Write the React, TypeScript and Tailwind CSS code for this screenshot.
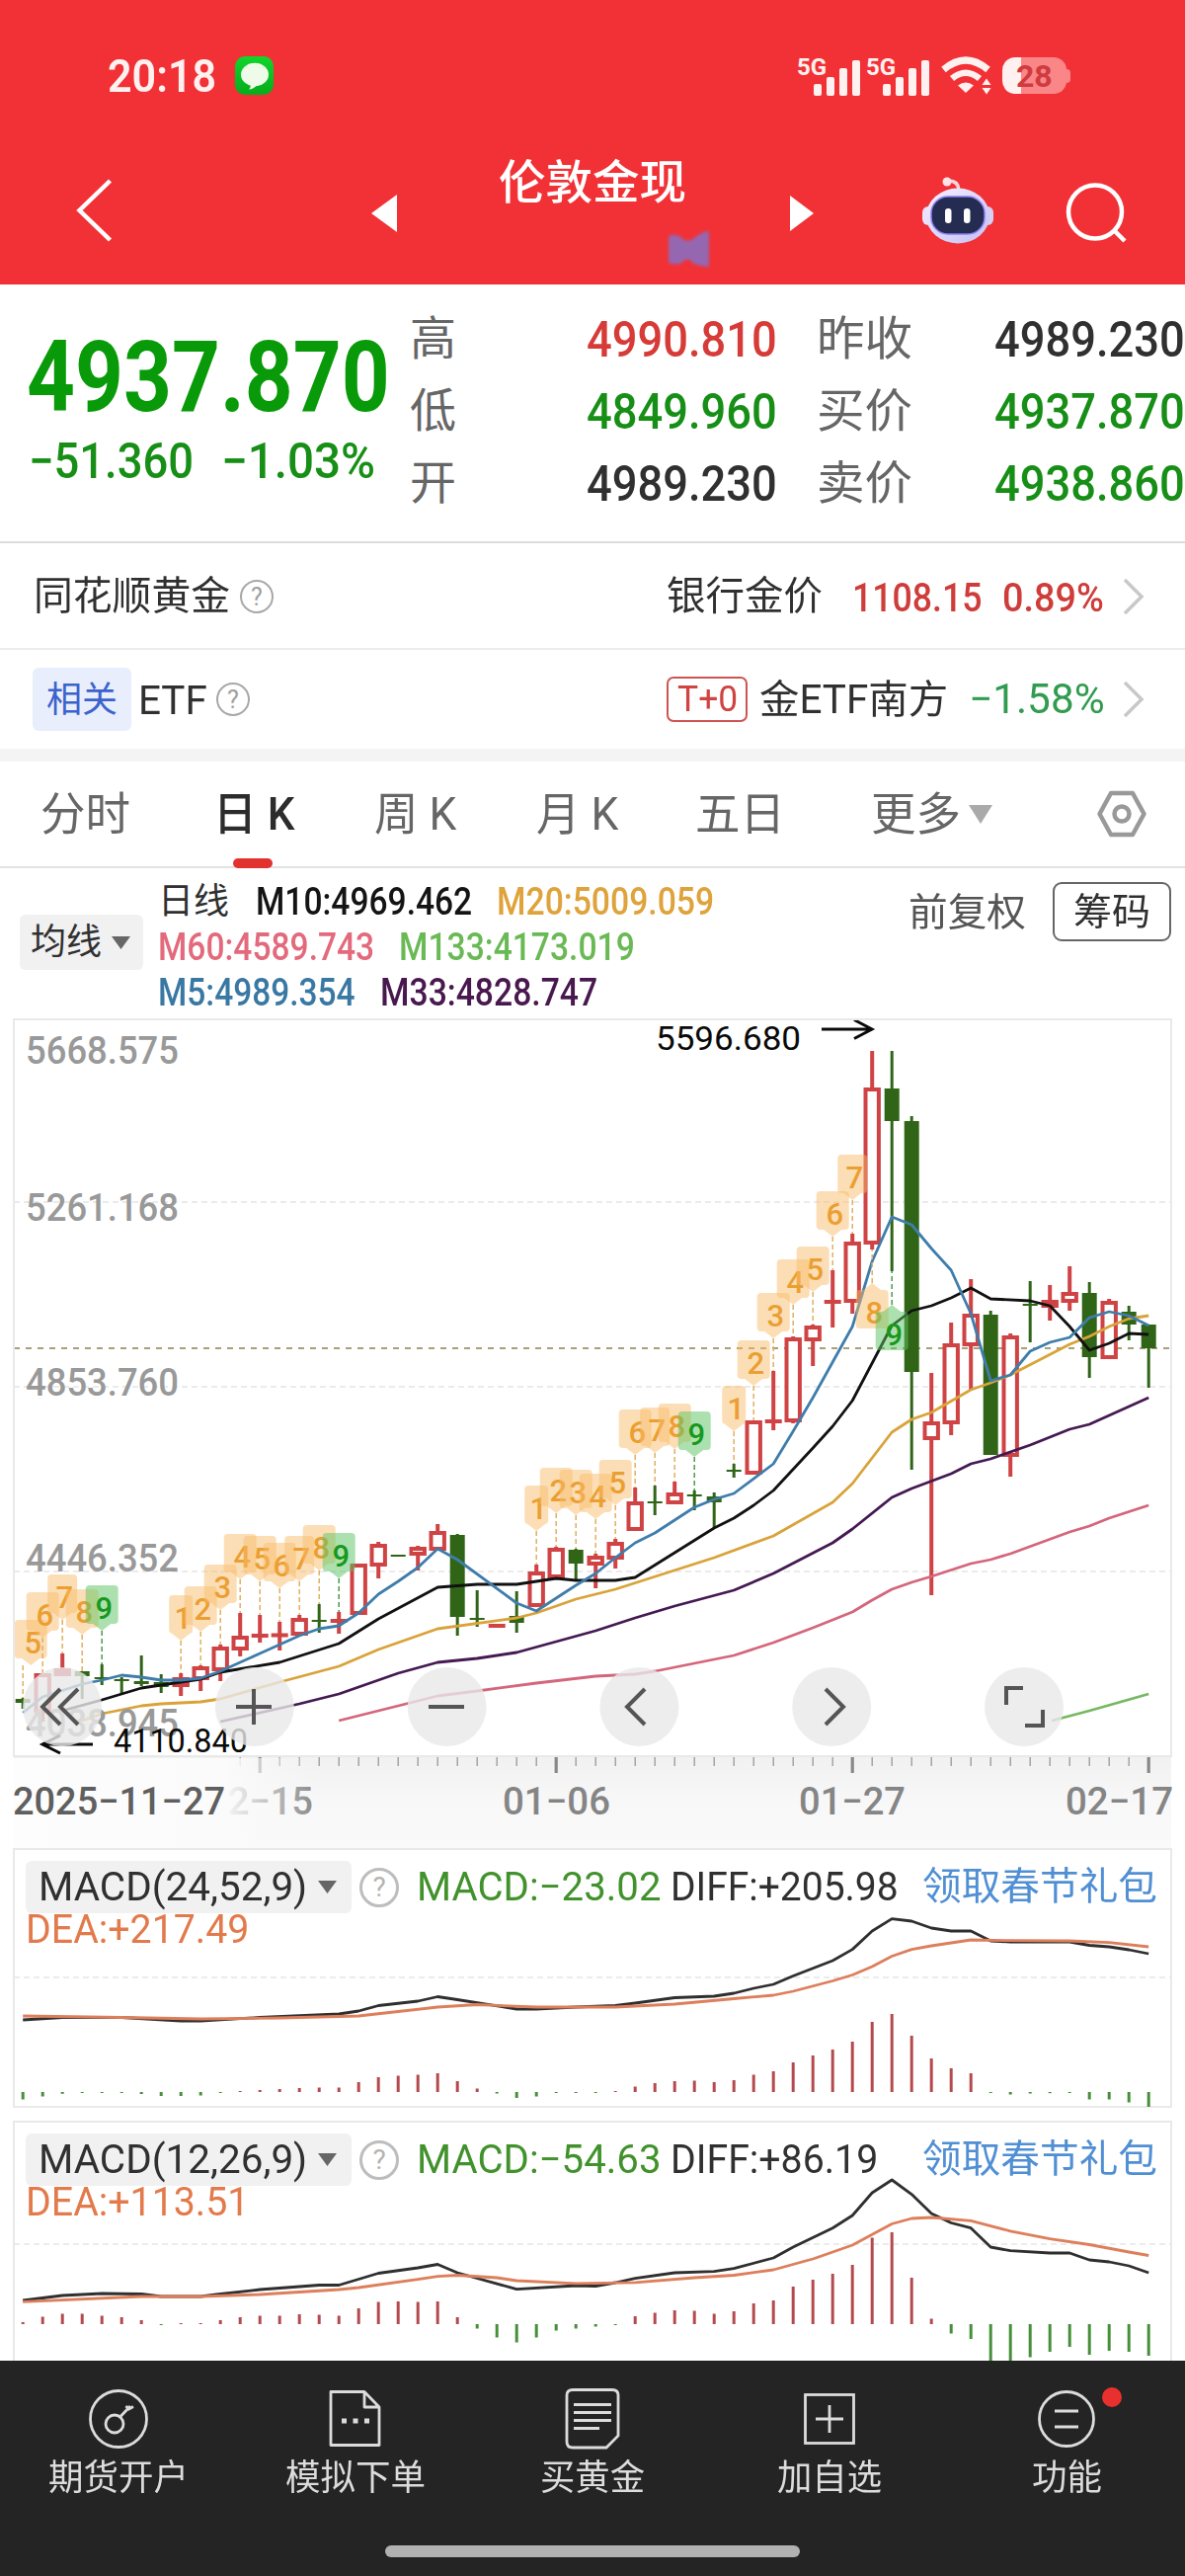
import React, { useLayoutEffect, useRef, useState } from 'react';

interface FitProps {
  className?: string;
  children: React.ReactNode;
}

// Stretches or squeezes a line of text so it fills the width of its box
const Fit: React.FC<FitProps> = ({ className = '', children }) => {
  const box = useRef<HTMLSpanElement>(null);
  const inner = useRef<HTMLSpanElement>(null);
  const [ratio, setRatio] = useState(1);

  useLayoutEffect(() => {
    if (box.current && inner.current) {
      setRatio(box.current.clientWidth / inner.current.offsetWidth);
    }
  }, []);

  return (
    <span ref={box} className={`block shrink-0 whitespace-nowrap leading-none ${className}`}>
      <span ref={inner} className="inline-block origin-left" style={{ transform: `scaleX(${ratio})` }}>
        {children}
      </span>
    </span>
  );
};

const Help: React.FC<{ className?: string }> = ({ className = '' }) => (
  <span className={`flex shrink-0 items-center justify-center rounded-full leading-none ${className}`}>?</span>
);

const Chevron = () => (
  <svg width="24" height="40" viewBox="0 0 24 40" fill="none" stroke="#c8c8c8" strokeWidth="3.5">
    <path d="M3 3 L20 20 L3 37" />
  </svg>
);

/* ---------- chart data: pixel rows of the chart canvas ---------- */

const px = (i: number) => 23.2 + 20 * i;

// [high, bodyTop, bodyBottom, low, up]
type Candle = [number, number, number, number, 0 | 1];

const candles: Candle[] = [
  [1719, 1720, 1724, 1730, 0], [1694, 1695, 1732, 1743, 1], [1674, 1690, 1695, 1697, 1], [1692, 1692, 1697, 1720, 0],
  [1685, 1698, 1700, 1706, 0], [1698, 1700, 1702, 1715, 0], [1676, 1702, 1705, 1707, 0], [1695, 1703, 1708, 1714, 0],
  [1694, 1699, 1706, 1717, 1], [1686, 1688, 1699, 1712, 1], [1665, 1668, 1690, 1702, 1], [1633, 1657, 1669, 1677, 1],
  [1635, 1655, 1657, 1663, 1], [1642, 1654, 1657, 1671, 1], [1635, 1639, 1654, 1654, 1], [1624, 1640, 1642, 1653, 0],
  [1632, 1639, 1643, 1654, 1], [1583, 1584, 1633, 1633, 1], [1561, 1564, 1584, 1598, 1], [1574, 1574, 1576, 1576, 0],
  [1565, 1567, 1573, 1590, 1], [1543, 1551, 1568, 1569, 1], [1553, 1554, 1637, 1656, 0], [1610, 1638, 1640, 1647, 0],
  [1644, 1644, 1648, 1648, 1], [1611, 1636, 1643, 1653, 0], [1584, 1592, 1625, 1627, 1], [1566, 1568, 1596, 1597, 1],
  [1568, 1569, 1583, 1600, 0], [1573, 1576, 1583, 1608, 1], [1558, 1562, 1577, 1588, 1], [1506, 1521, 1548, 1548, 1],
  [1504, 1520, 1522, 1534, 0], [1500, 1512, 1521, 1522, 1], [1509, 1513, 1515, 1529, 0], [1511, 1515, 1521, 1547, 0],
  [1482, 1488, 1490, 1496, 0], [1438, 1439, 1491, 1493, 1], [1388, 1438, 1440, 1448, 1], [1353, 1355, 1438, 1441, 1],
  [1341, 1343, 1356, 1383, 1], [1286, 1317, 1319, 1344, 1], [1249, 1258, 1317, 1330, 1], [1064, 1102, 1258, 1265, 1],
  [1064, 1102, 1135, 1287, 0], [1130, 1135, 1389, 1488, 0], [1390, 1440, 1456, 1615, 1], [1339, 1361, 1440, 1453, 1],
  [1295, 1331, 1361, 1407, 1], [1327, 1331, 1473, 1473, 0], [1350, 1353, 1473, 1495, 1], [1297, 1320, 1322, 1359, 0],
  [1301, 1317, 1322, 1337, 1], [1282, 1309, 1317, 1327, 1], [1298, 1309, 1374, 1395, 0], [1315, 1318, 1374, 1376, 1],
  [1322, 1328, 1341, 1357, 0], [1341, 1341, 1365, 1405, 0],
];

type Pt = [number, number];

const averages: { color: string; pts: Pt[] }[] = [
  { color: '#76b862', pts: [[52.1, 1742], [54, 1732], [57, 1715]] },
  {
    color: '#d4667c',
    pts: [[16, 1742], [21, 1717], [23, 1712], [26, 1704], [29, 1697], [31, 1695], [32, 1692], [36, 1676], [38, 1663], [40, 1648], [42, 1632], [43, 1620], [44, 1609], [45, 1602], [46, 1596], [48, 1583], [49, 1579], [50, 1573], [53, 1551], [54, 1545], [55, 1537], [57, 1524]],
  },
  {
    color: '#451a52',
    pts: [[10, 1743], [14, 1725], [16, 1715], [19, 1694], [21, 1683], [23, 1679], [25, 1673], [27, 1662], [29, 1651], [31, 1638], [33, 1626], [36, 1610], [38, 1593], [41, 1562], [42, 1548], [44, 1516], [45, 1507], [47, 1492], [48, 1482], [49, 1477], [51, 1463], [53, 1447], [54, 1442], [56, 1424], [57, 1415]],
  },
  {
    color: '#d9a33a',
    pts: [[3, 1742], [4, 1735], [6, 1727], [7, 1725], [9, 1723], [10, 1720], [13, 1703], [16, 1687], [18, 1670], [21, 1649], [25, 1638], [26, 1633], [28, 1619], [29, 1614], [30, 1609], [35, 1577], [38, 1555], [41, 1521], [42, 1502], [43, 1476], [44, 1450], [45, 1437], [46, 1430], [48, 1407], [49, 1400], [50, 1392], [53, 1361], [54, 1353], [55, 1343], [56, 1335], [57, 1332]],
  },
  {
    color: '#111111',
    pts: [[2, 1732], [4, 1721], [6, 1709], [8, 1703], [9, 1700], [10, 1693], [13, 1683], [16, 1664], [18, 1639], [21, 1607], [23, 1604], [25, 1604], [26, 1601], [27, 1598], [28, 1600], [30, 1600], [31, 1597], [35, 1547], [36, 1537], [37, 1524], [38, 1509], [40, 1466], [41, 1444], [42, 1418], [43, 1380], [44, 1342], [45, 1327], [46, 1322], [47, 1314], [48, 1304], [49, 1315], [51, 1317], [52, 1322], [53, 1343], [54, 1367], [55, 1360], [56, 1350], [57, 1351]],
  },
  {
    color: '#3f7dab',
    pts: [[0, 1734], [1, 1718], [3, 1705], [4, 1701], [5, 1696], [6, 1698], [7, 1701], [8, 1701], [9, 1699], [10, 1692], [11, 1683], [12, 1674], [13, 1665], [14, 1656], [15, 1649], [16, 1646], [17, 1633], [18, 1614], [19, 1601], [20, 1587], [21, 1568], [22, 1579], [25, 1623], [26, 1631], [27, 1618], [28, 1605], [29, 1593], [30, 1577], [31, 1562], [32, 1552], [33, 1539], [34, 1526], [35, 1518], [36, 1512], [38, 1482], [39, 1449], [40, 1415], [42, 1343], [43, 1277], [44, 1232], [45, 1240], [46, 1264], [47, 1286], [48, 1330], [49, 1398], [50, 1392], [51, 1368], [52, 1359], [53, 1354], [54, 1334], [55, 1328], [56, 1332], [57, 1342]],
  },
];

// [candle, top of the tag, count, x shift]
const tags: [number, number, number, number?][] = [
  [0, 1640, 5, 8], [1, 1612, 6], [2, 1594, 7], [3, 1609, 8], [4, 1605, 9],
  [8, 1615, 1], [9, 1606, 2], [10, 1584, 3], [11, 1553, 4], [12, 1555, 5], [13, 1562, 6], [14, 1555, 7], [15, 1544, 8], [16, 1552, 9],
  [26, 1504, 1], [27, 1486, 2], [28, 1488, 3], [29, 1492, 4], [30, 1478, 5], [31, 1427, 6], [32, 1425, 7], [33, 1421, 8], [34, 1429, 9],
  [36, 1403, 1], [37, 1357, 2], [38, 1309, 3], [39, 1275, 4], [40, 1262, 5], [41, 1206, 6], [42, 1169, 7],
];

const macdSlow = {
  zero: 2118,
  mid: 2002,
  bars: [-7.5, -4.5, -1.8, -1, -1, -1, -2, -4, -4, -3.5, -1, 1, 2, 3, 4, 4.5, 4.5, 10, 15, 16.5, 17.5, 19, 11, 3.5, -1.5, -6, -4.5, -1, -1, -1, 1, 5.5, 9, 11, 11.5, 10, 12, 17.5, 21, 30, 37, 43, 51, 71, 79, 57, 34, 24, 19, -1, -2.5, -1.5, -1.2, -1, -7.5, -7.5, -10.5, -15],
  diff: [[0, 2045], [2, 2042.5], [5, 2042.5], [8, 2046], [9, 2046], [12, 2042.5], [16, 2039], [17, 2036], [18, 2030.5], [20, 2026], [21, 2021.5], [22, 2024.5], [25, 2034], [26, 2034], [28, 2032], [30, 2030.5], [31, 2028], [33, 2022.5], [35, 2021], [36, 2018], [37, 2013], [38, 2009], [39, 2000.5], [41, 1985], [42, 1973.6], [43, 1955], [44, 1942.6], [45, 1945], [46, 1952], [47, 1955], [48, 1955], [49, 1965], [50, 1966], [53, 1966], [54, 1969.5], [55, 1971], [56, 1974], [57, 1978]] as Pt[],
  dea: [[0, 2041], [5, 2042.5], [9, 2044], [13, 2043], [17, 2041], [19, 2036.5], [21, 2032], [23, 2029.5], [26, 2032], [30, 2032], [33, 2029], [36, 2023.5], [38, 2020], [39, 2016], [41, 2005.5], [42, 1999.5], [43, 1991], [44, 1980.5], [45, 1973.6], [46, 1970], [48, 1964], [50, 1964.7], [53, 1965], [55, 1966.7], [57, 1971]] as Pt[],
};

const macdFast = {
  zero: 2353,
  mid: 2272,
  bars: [2, 7.5, 10.5, 10.5, 8.5, 7, 4, -1, 1, 1, 4, 7, 8.5, 8.5, 10, 9.5, 8.5, 16, 22.5, 23, 22.5, 23, 7, -4.5, -13.5, -18.5, -13.5, -6.5, -4.5, -2.5, -1, 8, 11.5, 14, 13.5, 10.5, 13, 21, 24, 38, 45, 51, 60, 87.5, 93, 47, 5.5, -9.5, -15, -45, -45, -33.5, -28, -23, -31, -27, -28, -32],
  diff: [[0, 2329], [2, 2324], [4, 2322], [6, 2322.5], [7, 2325], [9, 2325], [10, 2322.5], [12, 2318], [15, 2313.5], [16, 2313.5], [18, 2301.5], [20, 2296], [21, 2292.5], [22, 2301], [25, 2317.6], [28, 2314], [29, 2314.5], [30, 2311], [31, 2306.6], [33, 2301], [35, 2299.7], [36, 2296.6], [38, 2286], [39, 2275], [41, 2255.7], [42, 2243], [43, 2220], [44, 2207], [45, 2221.6], [46, 2241], [47, 2250.5], [48, 2255.7], [49, 2275], [50, 2278.7], [52, 2281], [53, 2281], [54, 2288], [55, 2290], [56, 2294], [57, 2301]] as Pt[],
  dea: [[0, 2330.4], [6, 2325], [9, 2325], [12, 2323], [16, 2318], [17, 2316], [20, 2307.7], [21, 2304.6], [22, 2303.5], [24, 2306], [25, 2309], [28, 2311.8], [31, 2310.8], [34, 2306], [36, 2303.5], [38, 2298], [40, 2287], [42, 2273], [44, 2251.5], [45, 2246], [46, 2245], [48, 2248.4], [50, 2258.8], [52, 2266.7], [54, 2272.5], [56, 2280], [57, 2283.5]] as Pt[],
};

const line = (pts: Pt[]) => pts.map(([i, y]) => `${px(i)},${y}`).join(' ');

/* ---------- header ---------- */

const Signal = () => (
  <div className="relative h-[42px] w-[70px]">
    <Fit className="absolute left-0 top-0 w-[30px] text-[24px] font-bold">5G</Fit>
    <svg className="absolute left-0 top-0" width="70" height="42" fill="#fff1f0">
      <rect x="17" y="29" width="8" height="12" rx="2" />
      <rect x="30" y="22" width="8" height="19" rx="2" />
      <rect x="43" y="13" width="8" height="28" rx="2" />
      <rect x="56" y="5" width="8" height="36" rx="2" />
    </svg>
  </div>
);

const StatusBar = () => (
  <div className="flex h-[156px] items-center pb-[3px] pl-[109px] text-[#fff1f0]">
    <Fit className="w-[110px] text-[47px] font-semibold">20:18</Fit>
    <div className="ml-[19px] flex h-[39px] w-[39px] items-center justify-center rounded-[10px] bg-gradient-to-b from-[#12d52c] to-[#06ab1b]">
      <svg width="30" height="28" viewBox="0 0 30 28" fill="#eefbe9">
        <ellipse cx="15" cy="12.5" rx="14" ry="11.8" />
        <path d="M10 20 Q12 25 9 27.5 Q15 27 18 22 Z" />
      </svg>
    </div>
    <div className="ml-[530px] flex items-center">
      <Signal />
      <Signal />
      <svg className="ml-[6px]" width="52" height="40" viewBox="0 0 52 40" fill="none" stroke="#fff1f0">
        <path d="M2.5 13.5 Q25 -5.500 47.500 13.500" strokeWidth="7" />
        <path d="M11 22.500 Q25 11 39 22.500" strokeWidth="6.500" />
        <path d="M17 29.500 Q25 23.500 33 29.500 L25 37 Z" fill="#fff1f0" stroke="none" />
        <path d="M41.500 29 L46 22.500 L50.500 29 Z M41.500 32 L46 38.500 L50.500 32 Z" fill="#fff1f0" stroke="none" />
      </svg>
      <div className="ml-[10px] flex h-[37px] w-[65px] items-center overflow-hidden rounded-[13px] bg-gradient-to-r from-[#fff1f0] from-[30%] to-[#fb8688] to-[30%] pl-[14px] text-[#cf3b3e]">
        <Fit className="w-[37px] text-[32px] font-bold">28</Fit>
      </div>
      <div className="h-[14px] w-[4px] rounded-r-full bg-[#fb8688]" />
    </div>
  </div>
);

const Robot = () => (
  <svg width="74" height="68" viewBox="0 0 74 68">
    <defs>
      <linearGradient id="shell" x1="0" y1="0" x2="1" y2="1">
        <stop offset="0" stopColor="#f6efff" />
        <stop offset="1" stopColor="#c3c0f5" />
      </linearGradient>
    </defs>
    <path d="M26 4 Q37 3 38 13" fill="none" stroke="#fbd3dc" strokeWidth="3.5" />
    <circle cx="26" cy="5" r="4.500" fill="#ffe3e8" />
    <rect x="1" y="30" width="12" height="19" rx="6" fill="#e9e4fb" />
    <rect x="61" y="30" width="12" height="19" rx="6" fill="#d5cff6" />
    <ellipse cx="37" cy="39.500" rx="32" ry="28" fill="url(#shell)" />
    <rect x="10" y="20" width="54" height="38" rx="17" fill="#252c52" stroke="#8c7cf0" strokeWidth="1.500" />
    <rect x="24" y="32" width="6.500" height="15" rx="3.200" fill="#fff" />
    <rect x="43" y="32" width="6.500" height="15" rx="3.200" fill="#fff" />
  </svg>
);

const Header = () => (
  <header className="h-[288px] bg-[#f23136]">
    <StatusBar />
    <div className="flex h-[132px] items-start text-white">
      <svg className="ml-[74px] mt-[23px]" width="42" height="68" viewBox="0 0 42 68" fill="none" stroke="#fff" strokeWidth="4.500">
        <path d="M37.500 4 L6.500 34 L37.500 64" />
      </svg>
      <svg className="ml-[260px] mt-[41px]" width="26" height="38" fill="#fff">
        <path d="M26 0 V38 L0 19 Z" />
      </svg>
      <div className="ml-[103px] w-[191px]">
        <Fit className="mt-[5px] w-[190px] text-[47px] font-medium">伦敦金现</Fit>
        <svg className="ml-[169px] mt-[24px] blur-[1.500px]" width="46" height="40" fill="#9567b0">
          <path d="M3 8 Q5 4 14 7 Q22 16 30 8 Q38 2 44 2 V38 Q34 38 27 34 A5.500 5.500 0 0 0 17 34 Q10 37 3 34 Z" />
        </svg>
      </div>
      <svg className="ml-[104px] mt-[42px]" width="24" height="36" fill="#fff">
        <path d="M0 0 V36 L24 18 Z" />
      </svg>
      <div className="ml-[109px] mt-[23px]">
        <Robot />
      </div>
      <svg className="ml-[72px] mt-[29px]" width="64" height="64" viewBox="0 0 64 64" fill="none" stroke="#fff" strokeWidth="4.500">
        <circle cx="30" cy="29.500" r="27" />
        <path d="M49 48 L60 59" />
      </svg>
    </div>
  </header>
);

/* ---------- quote ---------- */

const quoteRows = [
  ['高', '4990.810', 'text-[#d63b38]', '昨收', '4989.230', 'text-[#303030]'],
  ['低', '4849.960', 'text-[#178f17]', '买价', '4937.870', 'text-[#178f17]'],
  ['开', '4989.230', 'text-[#303030]', '卖价', '4938.860', 'text-[#178f17]'],
];

const Quote = () => (
  <section className="flex h-[262px] border-b-2 border-[#dcdcdc]">
    <div className="ml-[27px] w-[388px]">
      <Fit className="mt-[44px] w-[368px] text-[100px] font-bold text-[#089a08]">4937.870</Fit>
      <div className="mt-[10px] flex pl-[2px] text-[50px] text-[#178f17]">
        <Fit className="w-[167px] font-medium">−51.360</Fit>
        <Fit className="ml-[28px] w-[156px] font-medium">−1.03%</Fit>
      </div>
    </div>
    <div className="mt-[18px] flex flex-col">
      {quoteRows.map(([a, av, ac, b, bv, bc]) => (
        <div key={a} className="flex h-[73px] items-center">
          <Fit className="w-[47px] text-[47px] text-[#666]">{a}</Fit>
          <Fit className={`ml-[132px] mt-[3px] w-[193px] text-[50px] font-medium ${ac}`}>{av}</Fit>
          <Fit className="ml-[40px] w-[97px] text-[47px] text-[#666]">{b}</Fit>
          <Fit className={`ml-[83px] mt-[3px] w-[193px] text-[50px] font-medium ${bc}`}>{bv}</Fit>
        </div>
      ))}
    </div>
  </section>
);

const Related = () => (
  <section className="text-[#303030]">
    <div className="flex h-[108px] items-center border-b-2 border-[#ececec] pl-[34px] pr-[40px] pt-[2px]">
      <Fit className="w-[199px] text-[40px]">同花顺黄金</Fit>
      <Help className="ml-[10px] h-[34px] w-[34px] border-2 border-[#a8a8a8] text-[25px] text-[#a0a0a0]" />
      <Fit className="ml-auto w-[158px] text-[40px]">银行金价</Fit>
      <Fit className="ml-[30px] mt-[3px] w-[132px] text-[40px] font-medium text-[#cf3d3a]">1108.15</Fit>
      <Fit className="ml-[20px] mt-[3px] w-[103px] text-[40px] font-medium text-[#cf3d3a]">0.89%</Fit>
      <span className="ml-[18px]"><Chevron /></span>
    </div>
    <div className="flex h-[100px] items-center pl-[33px] pr-[40px]">
      <div className="flex h-[64px] w-[100px] items-center justify-center rounded-[6px] bg-[#e9eefd] text-[#3c62cc]">
        <Fit className="w-[72px] pt-[2px] text-[36px]">相关</Fit>
      </div>
      <Fit className="ml-[7px] mt-[2px] w-[70px] text-[41px]">ETF</Fit>
      <Help className="ml-[9px] h-[34px] w-[34px] border-2 border-[#a8a8a8] text-[25px] text-[#a0a0a0]" />
      <div className="ml-auto flex h-[46px] w-[82px] items-center justify-center rounded-[7px] border-2 border-[#cc5553] text-[#cf4442]">
        <Fit className="w-[61px] text-[36px]">T+0</Fit>
      </div>
      <Fit className="ml-[12px] mt-[2px] w-[191px] text-[40px]">金ETF南方</Fit>
      <Fit className="ml-[21px] w-[138px] text-[42px] text-[#319c50]">−1.58%</Fit>
      <span className="ml-[17px]"><Chevron /></span>
    </div>
    <div className="h-[13px] bg-[#f4f4f4]" />
  </section>
);

/* ---------- tabs and averages ---------- */

const Tabs = () => (
  <nav className="flex h-[108px] items-center border-b-2 border-[#e2e2e2] pl-[41px] text-[46px] text-[#666]">
    <Fit className="w-[91px]">分时</Fit>
    <div className="relative ml-[84px] w-[83px] text-[#2c2c2c]">
      <Fit className="w-[83px] font-medium">日 K</Fit>
      <div className="absolute left-[20px] top-[68px] h-[10px] w-[40px] rounded-full bg-[#e23230]" />
    </div>
    <Fit className="ml-[80px] w-[83px]">周 K</Fit>
    <Fit className="ml-[81px] w-[83px]">月 K</Fit>
    <Fit className="ml-[78px] w-[91px]">五日</Fit>
    <Fit className="ml-[87px] w-[91px]">更多</Fit>
    <svg className="ml-[8px]" width="24" height="19" fill="#aaa">
      <path d="M0 0 H24 L12 19 Z" />
    </svg>
    <svg className="ml-[105px]" width="52" height="48" viewBox="0 0 52 48" fill="none" stroke="#999" strokeWidth="4.500">
      <path d="M15 3 H37 L48.500 24 L37 45 H15 L3.500 24 Z" strokeLinejoin="round" />
      <circle cx="26" cy="24" r="7.500" />
    </svg>
  </nav>
);

const Averages = () => (
  <section className="flex h-[150px] text-[38px] font-medium">
    <div className="ml-[20px] mt-[47px] flex h-[56px] w-[125px] items-center rounded-[6px] bg-[#f1f1f1] pl-[11px] text-[#303030]">
      <Fit className="w-[72px] text-[36px] font-normal">均线</Fit>
      <svg className="ml-[10px]" width="19" height="13" fill="#666">
        <path d="M0 0 H19 L9.500 13 Z" />
      </svg>
    </div>
    <div className="ml-[15px] mt-[11px] flex w-[760px] flex-col">
      <div className="flex h-[46px] items-center">
        <Fit className="w-[72px] text-[36px] font-normal text-[#303030]">日线</Fit>
        <Fit className="ml-[27px] w-[219px] text-[#141414]">M10:4969.462</Fit>
        <Fit className="ml-[25px] w-[220px] text-[#dfa33c]">M20:5009.059</Fit>
      </div>
      <div className="flex h-[46px] items-center">
        <Fit className="w-[219px] text-[#e36a7c]">M60:4589.743</Fit>
        <Fit className="ml-[25px] w-[239px] text-[#69b955]">M133:4173.019</Fit>
      </div>
      <div className="flex h-[46px] items-center">
        <Fit className="w-[200px] text-[#3a78a4]">M5:4989.354</Fit>
        <Fit className="ml-[25px] w-[220px] text-[#48184f]">M33:4828.747</Fit>
      </div>
    </div>
    <div className="mt-[13px] flex h-[62px] items-center font-normal">
      <Fit className="mt-[3px] w-[119px] text-[39px] text-[#555]">前复权</Fit>
      <div className="ml-[27px] flex h-[60px] w-[120px] items-center justify-center rounded-[9px] border-2 border-[#666] text-[#303030]">
        <Fit className="w-[78px] text-[38px]">筹码</Fit>
      </div>
    </div>
  </section>
);

/* ---------- price chart ---------- */

interface TagProps {
  x: number;
  lineX: number;
  top: number;
  n: number;
  candleY: number;
  below?: boolean;
}

const Tag: React.FC<TagProps> = ({ x, lineX, top, n, candleY, below }) => {
  const w = n === 1 ? 24 : n === 7 ? 30 : 33;
  const green = n === 9;
  return (
    <g>
      <line
        x1={lineX}
        x2={lineX}
        y1={below ? top - 7 : top + 46}
        y2={candleY}
        stroke={green ? '#4f9a4f' : '#e0b060'}
        strokeWidth="1.500"
        strokeDasharray="5 3"
      />
      <g fill={green ? 'rgb(90 195 95 / 0.5)' : 'rgb(249 187 103 / 0.48)'}>
        <rect x={x - w / 2} y={top} width={w} height={39} rx="4" />
        <path d={below ? `M${x - 9} ${top} L${x} ${top - 7} L${x + 9} ${top} Z` : `M${x - 9} ${top + 39} L${x} ${top + 46} L${x + 9} ${top + 39} Z`} />
      </g>
      <text x={x + 2} y={top + 34} fontSize="31" fontWeight="500" textAnchor="middle" fill={green ? '#18981c' : '#eb9f32'}>
        {n}
      </text>
    </g>
  );
};

const axis: [string, number][] = [
  ['5668.575', 1077], ['5261.168', 1236], ['4853.760', 1413], ['4446.352', 1591], ['4038.945', 1758],
];

const buttons = [
  'M61 -18 L43 0 L61 18 M79 -18 L61 0 L79 18',
  'M239 0 H275 M257 -18 V18',
  'M434 0 H470',
  'M653 -18 L635 0 L653 18',
  'M836 -18 L854 0 L836 18',
  'M1019 -2 V-19 H1036 M1056 3 V19 H1038',
];

const PriceChart = () => (
  <svg className="block" width="1200" height="842" viewBox="0 1029 1200 842">
    <defs>
      <linearGradient id="scale" x1="0" y1="0" x2="0" y2="1">
        <stop offset="0" stopColor="#f1f1f1" />
        <stop offset="0.5" stopColor="#f8f8f8" />
        <stop offset="1" stopColor="#fafafa" />
      </linearGradient>
      <linearGradient id="fade" x1="0" y1="0" x2="1" y2="0">
        <stop offset="0" stopColor="#fdfdfd" />
        <stop offset="0.68" stopColor="#fbfbfb" />
        <stop offset="1" stopColor="#f8f8f8" stopOpacity="0" />
      </linearGradient>
    </defs>

    <g stroke="#ebebeb" strokeWidth="2" strokeDasharray="6 4">
      <path d="M14 1217 H1186 M14 1404 H1186 M14 1591 H1186" />
    </g>
    <path d="M14 1365 H1186" stroke="#a9a078" strokeWidth="2" strokeDasharray="6 6" />

    {candles.map(([h, t, b, l, up], i) => {
      const x = px(i);
      if (!up) {
        return (
          <g key={i} fill="#306517">
            <rect x={x - 1.5} y={h} width={3} height={l - h} />
            <rect x={x - 7.5} y={t} width={15} height={b - t} />
          </g>
        );
      }
      return (
        <g key={i} stroke="#cf4345" strokeWidth="4">
          <path d={`M${x} ${h} V${t} M${x} ${b} V${l}`} />
          {b - t < 5
            ? <path d={`M${x - 8.5} ${(t + b) / 2} H${x + 8.5}`} />
            : <rect x={x - 6.7} y={t + 1} width={13.4} height={b - t - 1} fill="#fff" />}
        </g>
      );
    })}

    {averages.map((a) => (
      <polyline key={a.color} points={line(a.pts)} fill="none" stroke={a.color} strokeWidth="2.800" strokeLinejoin="round" />
    ))}

    {tags.map(([i, top, n, shift = 0]) => (
      <Tag key={i} x={px(i) + shift} lineX={px(i)} top={top} n={n} candleY={candles[i][0]} />
    ))}
    <Tag x={px(43)} lineX={px(43)} top={1306} n={8} candleY={1265} below />
    <Tag x={px(44)} lineX={px(44)} top={1328} n={9} candleY={1287} below />

    {/* Price scale */}
    <g fontSize="39" fontWeight="500" fill="#999">
      {axis.map(([label, y]) => (
        <text key={label} x="26" y={y} textLength="155" lengthAdjust="spacingAndGlyphs">{label}</text>
      ))}
    </g>
    <g fontSize="34" fill="#0a0a0a">
      <text x="664" y="1063" textLength="147" lengthAdjust="spacingAndGlyphs">5596.680</text>
      <text x="115" y="1774" textLength="136" lengthAdjust="spacingAndGlyphs">4110.840</text>
    </g>
    <path d="M832 1042 H883 M865 1032.500 L883 1042 L865 1051.500" fill="none" stroke="#0a0a0a" strokeWidth="3" />
    <path d="M94 1766 H43 M61 1757 L43 1766 L61 1775" fill="none" stroke="#0a0a0a" strokeWidth="3" />

    {/* Floating controls */}
    {buttons.map((d, i) => (
      <g key={d} transform="translate(0 1728)">
        <circle cx={63 + 194.8 * i} cy="0" r="40" fill="#e8e8e8" fillOpacity="0.8" />
        <path d={d} fill="none" stroke="#555" strokeWidth="4" />
      </g>
    ))}

    {/* Time scale */}
    <rect x="14" y="1779" width="1172" height="93" fill="url(#scale)" />
    <g stroke="#999">
      {candles.map((_, i) =>
        i < 11 ? null : i % 15 === 12 ? (
          <path key={i} d={`M${px(i)} 1778 V1795`} strokeWidth="3.200" stroke="#888" />
        ) : (
          <path key={i} d={`M${px(i)} 1778 V1788`} strokeWidth="1.300" />
        ),
      )}
    </g>
    <g fontSize="39" fontWeight="500" fill="#858585">
      <text x="209" y="1837" textLength="108" lengthAdjust="spacingAndGlyphs">12−15</text>
      <text x="509" y="1837" textLength="109" lengthAdjust="spacingAndGlyphs">01−06</text>
      <text x="809" y="1837" textLength="108" lengthAdjust="spacingAndGlyphs">01−27</text>
      <text x="1079" y="1837" textLength="109" lengthAdjust="spacingAndGlyphs">02−17</text>
      <rect x="14" y="1780" width="310" height="92" fill="url(#fade)" />
      <text x="13" y="1837" textLength="215" lengthAdjust="spacingAndGlyphs" fill="#5f5f5f">2025−11−27</text>
    </g>
    <rect x="14" y="1032" width="1172" height="746" fill="none" stroke="#e9e9e9" strokeWidth="2" />
  </svg>
);

/* ---------- MACD ---------- */

interface MacdProps {
  name: string;
  macd: string;
  diff: string;
  diffWidth: string;
  dea: string;
  data: typeof macdSlow;
  origin: number;
  height: number;
}

const Macd: React.FC<MacdProps> = ({ name, macd, diff, diffWidth, dea, data, origin, height }) => (
  <div className="relative">
    <svg className="absolute left-0 top-0" width="1200" height={height} viewBox={`0 ${origin} 1200 ${height}`}>
      <rect x="14" y={origin + 1} width="1172" height={height < 262 ? 300 : 261} fill="none" stroke="#e9e9e9" strokeWidth="2" />
      <path d={`M14 ${data.mid} H1186`} stroke="#e6e6e6" strokeWidth="1.500" strokeDasharray="6 4" />
      {data.bars.map((v, i) => (
        <rect
          key={i}
          x={px(i) - 1.5}
          y={v > 0 ? data.zero - v : data.zero}
          width={3}
          height={Math.abs(v)}
          fill={v > 0 ? '#b44a4e' : '#46903a'}
        />
      ))}
      <g fill="none" strokeWidth="2.800" strokeLinejoin="round">
        <polyline points={line(data.diff)} stroke="#2f2f2f" />
        <polyline points={line(data.dea)} stroke="#dd7f5b" />
      </g>
    </svg>
    <div className="relative pt-[13px] text-[40px] text-[#303030]">
      <div className="flex h-[53px] items-center pl-[26px]">
        <div className="flex h-[53px] w-[330px] items-center rounded-[6px] bg-[#f1f1f1] pl-[13px]">
          <Fit className="w-[272px]">{name}</Fit>
          <svg className="ml-[11px]" width="19" height="13" fill="#666">
            <path d="M0 0 H19 L9.500 13 Z" />
          </svg>
        </div>
        <Help className="ml-[8px] h-[40px] w-[40px] border-[3px] border-[#bdbdbd] text-[28px] text-[#b3b3b3]" />
        <Fit className="ml-[18px] w-[247px] text-[#41922c]">{macd}</Fit>
        <Fit className={`ml-[10px] ${diffWidth}`}>{diff}</Fit>
        <Fit className="ml-auto mr-[28px] w-[238px] text-[39px] text-[#508fd3]">领取春节礼包</Fit>
      </div>
      <Fit className="ml-[26px] mt-[-3px] w-[226px] text-[#e27a4c]">{dea}</Fit>
    </div>
  </div>
);

/* ---------- bottom bar ---------- */

const actions = [
  {
    label: '期货开户',
    width: 'w-[142px]',
    icon: (
      <>
        <circle cx="32" cy="32" r="28.500" />
        <circle cx="28" cy="37" r="9" />
        <path d="M34 29.500 L44 19 M39.500 19 L42.500 22 L47 19.500" />
      </>
    ),
  },
  {
    label: '模拟下单',
    width: 'w-[142px]',
    icon: (
      <>
        <path d="M7 4.500 H41 L56 20 V58.500 H7 Z M41 4.500 V20 H56" strokeLinejoin="round" />
        <path d="M18 34 H23 M29.500 34 H34.500 M41 34 H46" strokeWidth="5" />
      </>
    ),
  },
  {
    label: '买黄金',
    width: 'w-[106px]',
    icon: (
      <>
        <path d="M12 2.500 H52 Q58 2.500 58 8 V49 L46 61 H12 Q6 61 6 55 V8 Q6 2.500 12 2.500 Z" />
        <path d="M13 17.500 H51 M13 25.500 H51 M13 33.500 H51 M13 41.500 H39" />
      </>
    ),
  },
  {
    label: '加自选',
    width: 'w-[106px]',
    icon: (
      <>
        <rect x="7.500" y="7.500" width="49" height="49" />
        <path d="M32 18 V46 M18 32 H46" />
      </>
    ),
  },
  {
    label: '功能',
    width: 'w-[71px]',
    icon: (
      <>
        <circle cx="32" cy="32" r="27.500" />
        <path d="M20 24 H44 M20 40 H44" />
      </>
    ),
  },
];

const BottomBar = () => (
  <footer className="relative z-10 h-[218px] bg-[#242424]">
    <div className="flex pt-[27px]">
      {actions.map((a, i) => (
        <div key={a.label} className="relative flex w-[240px] flex-col items-center text-[36px] text-[#dcdcdc]">
          <svg width="64" height="64" viewBox="0 0 64 64" fill="none" stroke="#dcdcdc" strokeWidth="2.800">
            {a.icon}
          </svg>
          <Fit className={`mt-[10px] ${a.width}`}>{a.label}</Fit>
          {i === 4 && <div className="absolute left-[156px] top-0 h-[20px] w-[20px] rounded-full bg-[#e8312f]" />}
        </div>
      ))}
    </div>
    <div className="mx-auto mt-[50px] h-[12px] w-[420px] rounded-full bg-[#b1b1b1]" />
  </footer>
);

export default function App() {
  return (
    <div className="h-[2608px] w-[1200px] overflow-hidden bg-white font-['Roboto','Noto_Sans_CJK_SC',sans-serif]">
      <Header />
      <Quote />
      <Related />
      <Tabs />
      <Averages />
      <PriceChart />
      <div className="h-[276px]">
        <Macd name="MACD(24,52,9)" macd="MACD:−23.02" diff="DIFF:+205.98" diffWidth="w-[231px]" dea="DEA:+217.49" data={macdSlow} origin={1871} height={264} />
      </div>
      <div className="h-[243px]">
        <Macd name="MACD(12,26,9)" macd="MACD:−54.63" diff="DIFF:+86.19" diffWidth="w-[210px]" dea="DEA:+113.51" data={macdFast} origin={2147} height={243} />
      </div>
      <BottomBar />
    </div>
  );
}
